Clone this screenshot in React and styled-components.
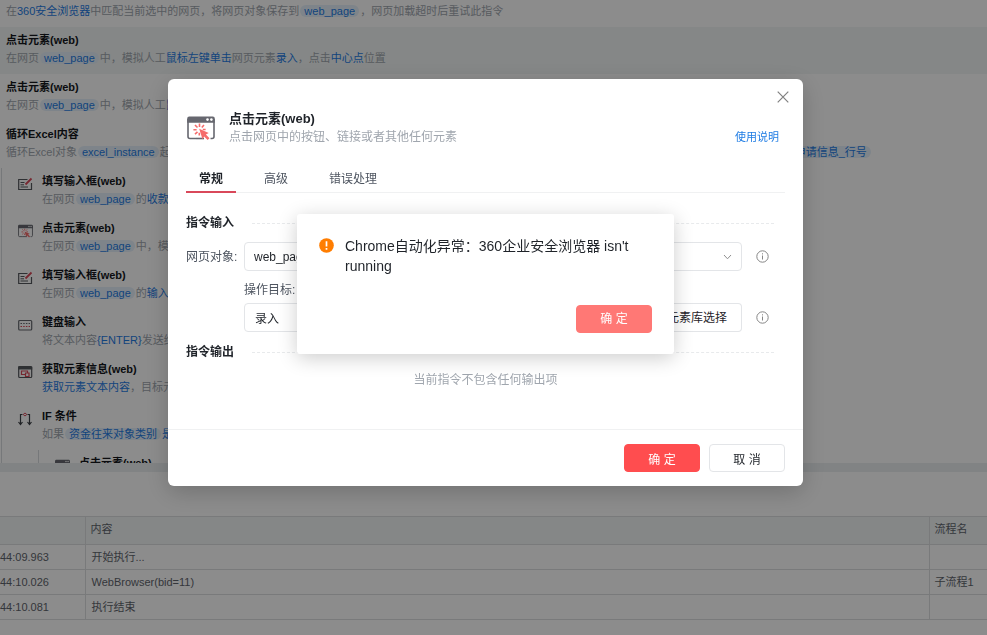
import styled, { createGlobalStyle } from "styled-components";

const colors = {
  primary: "#ff4d4f",
  primarySoft: "#ff7875",
  link: "#1f7ce4",
  text: "#1f2329",
  textRegular: "#4e5560",
  textMuted: "#a0a6ae",
  border: "#e3e5e8",
  line: "#f0f1f2",
  panel: "#f2f6f6",
  chip: "#e6f1fb",
};

const GlobalStyle = createGlobalStyle`
  * {
    box-sizing: border-box;
  }

  body {
    margin: 0;
    overflow: hidden;
    background: #fff;
    font-family: "Liberation Sans", "Noto Sans CJK SC", sans-serif;
    font-size: 12px;
    color: ${colors.text};
  }

  button, input, select {
    font: inherit;
    color: inherit;
    margin: 0;
  }
`;

const Page = styled.div`
  display: flex;
  flex-direction: column;
  height: 100vh;
`;

/* ---------- flow list ---------- */

const FlowPane = styled.main`
  flex: 1;
  min-height: 0;
  overflow: hidden;
  font-size: 11px;
  line-height: 18px;
  white-space: nowrap;
`;

const Command = styled.div`
  display: flex;
  gap: 9px;
  padding: ${(props) => (props.$untitled ? 2 : 4)}px 6px 7px ${(props) => (props.$nested ? 16 : 6)}px;
  background: ${(props) => (props.$selected ? colors.panel : "transparent")};

  svg {
    flex: none;
    margin-top: 5px;
  }
`;

const CommandTitle = styled.div`
  font-weight: 700;
  color: #14171c;
`;

const CommandDesc = styled.div`
  color: ${colors.textMuted};
`;

const Branch = styled.div`
  margin-left: ${(props) => props.$indent}px;
  border-left: 1px solid #d8dbde;
`;

const Value = styled.span`
  color: ${colors.link};
`;

const Chip = styled.span`
  margin: 0 1px;
  padding: 0 4px;
  border-radius: 7px;
  background: ${colors.chip};
  color: ${colors.link};
`;

const RangeText = styled.span`
  display: inline-block;
  min-width: 630px;
`;

/* ---------- log ---------- */

const Splitter = styled.div`
  height: 9px;
  background: #ebeff1;
`;

const LogPane = styled.section`
  height: 163px;
  padding-top: 44px;
`;

const LogTable = styled.table`
  width: 100%;
  table-layout: fixed;
  border-collapse: collapse;
  font-size: 11px;
  line-height: 18px;
  color: #5f656d;

  th,
  td {
    height: 25px;
    padding: 0 6px;
    border: 1px solid #dcdfe1;
    border-width: 1px 0 1px 1px;
    text-align: left;
    font-weight: 400;
    white-space: nowrap;
    overflow: hidden;
  }

  th {
    height: 28px;
    padding: 0 5px 3px;
    background: ${colors.panel};
  }

  th:first-child,
  td:first-child {
    width: 85px;
    padding: 0;
    border-left: 0;
  }

  th:last-child,
  td:last-child {
    width: 58px;
    padding-left: 5px;
  }
`;

/* ---------- command dialog ---------- */

const Overlay = styled.div`
  position: fixed;
  inset: 0;
  display: flex;
  align-items: flex-start;
  justify-content: center;
  padding: ${(props) => props.$top}px 16px 0 0;
  background: ${(props) => (props.$dim ? "rgba(0, 0, 0, 0.45)" : "transparent")};
`;

const Dialog = styled.section`
  position: relative;
  width: 100%;
  max-width: 635px;
  border-radius: 6px;
  background: #fff;
  box-shadow: 0 6px 24px rgba(0, 0, 0, 0.2);
`;

const CloseButton = styled.button`
  position: absolute;
  top: 8px;
  right: 10px;
  display: flex;
  align-items: center;
  justify-content: center;
  width: 20px;
  height: 20px;
  padding: 0;
  border: 0;
  background: none;
  cursor: pointer;
`;

const DialogHeader = styled.header`
  display: flex;
  align-items: center;
  gap: 14px;
  padding: 31px 24px 0 19px;
  line-height: 18px;

  h2 {
    margin: 0;
    font-size: 13px;
  }

  p {
    margin: 0;
    color: ${colors.textMuted};
  }
`;

const HelpLink = styled.a`
  align-self: flex-end;
  margin-left: auto;
  font-size: 11px;
  color: ${colors.link};
  text-decoration: none;
`;

const DialogBody = styled.div`
  padding: 0 18px;
  line-height: 18px;
`;

const Tabs = styled.div`
  display: flex;
  gap: 15px;
  margin-top: 19px;
  box-shadow: inset 0 -1px ${colors.line};
`;

const Tab = styled.button`
  height: 28px;
  padding: 1px 13px 0;
  border: 0;
  border-bottom: 2px solid ${(props) => (props.$active ? "#d9485a" : "transparent")};
  background: none;
  color: ${(props) => (props.$active ? colors.text : colors.textRegular)};
  font-weight: ${(props) => (props.$active ? 700 : 400)};
  cursor: pointer;
`;

const SectionTitle = styled.h3`
  display: flex;
  align-items: center;
  gap: 18px;
  margin: ${(props) => props.$top}px 11px 10px 0;
  font-size: 12px;

  &::after {
    content: "";
    flex: 1;
    border-top: 1px dashed #e8eaec;
  }
`;

const Form = styled.div`
  display: grid;
  grid-template-columns: 52px 1fr 21px;
  column-gap: 6px;
  align-items: center;
  padding-right: 16px;
  color: ${colors.textRegular};
  white-space: nowrap;
`;

const TargetLabel = styled.label`
  grid-column: 2 / 4;
  margin: 10px 0 4px;
`;

const SelectBox = styled.div`
  display: grid;
  align-items: center;

  select,
  svg {
    grid-area: 1 / 1;
  }

  select {
    width: 100%;
    height: 29px;
    padding: 0 9px;
    border: 1px solid ${colors.border};
    border-radius: 4px;
    background: #fff;
    color: ${colors.text};
    appearance: none;
  }

  svg {
    justify-self: end;
    margin-right: 10px;
    pointer-events: none;
  }
`;

const TargetBox = styled.div`
  grid-column: 2;
  display: flex;
  color: ${colors.text};

  input {
    flex: 1;
    min-width: 0;
    height: 29px;
    padding: 0 10px;
    border: 1px solid ${colors.border};
    border-radius: 4px 0 0 4px;
  }

  button {
    padding: 0 14px;
    border: 1px solid ${colors.border};
    border-left: 0;
    border-radius: 0 4px 4px 0;
    background: #fff;
  }
`;

const InfoButton = styled.button`
  display: flex;
  justify-content: flex-end;
  padding: 0;
  border: 0;
  background: none;
`;

const EmptyText = styled.p`
  margin: 0;
  text-align: center;
  color: ${colors.textMuted};
`;

const DialogFooter = styled.footer`
  display: flex;
  justify-content: flex-end;
  gap: 9px;
  margin-top: 40px;
  padding: 14px 18px;
  border-top: 1px solid ${colors.line};
`;

const Button = styled.button`
  width: 76px;
  height: 28px;
  padding: 0;
  border: 1px solid ${(props) => props.$color || colors.border};
  border-radius: 4px;
  background: ${(props) => props.$color || "#fff"};
  color: ${(props) => (props.$color ? "#fff" : colors.text)};
  cursor: pointer;
`;

/* ---------- error message ---------- */

const MessageBox = styled.section`
  display: flex;
  flex-direction: column;
  width: 100%;
  max-width: 377px;
  padding: 22px 22px 21px;
  border-radius: 3px;
  background: #fff;
  box-shadow: 0 4px 20px rgba(0, 0, 0, 0.2);

  ${Button} {
    align-self: flex-end;
    margin-top: 29px;
    padding-bottom: 4px;
  }
`;

const MessageText = styled.div`
  display: flex;
  gap: 11px;
  font-size: 14px;
  line-height: 20px;

  svg {
    flex: none;
    margin-top: 2px;
  }

  p {
    margin: 0;
  }
`;

/* ---------- icons ---------- */

function ClickIcon({ width = 28, height = 24 }) {
  return (
    <svg width={width} height={height} viewBox="0 0 28 24" fill="none">
      <path d="M9 22.500H3A2 2 0 0 1 1 20.500V3M27 3V20.500A2 2 0 0 1 25 22.500H23.500" stroke="#66676f" strokeWidth="1.600" />
      <path d="M.2 6.800V2.500A2 2 0 0 1 2.200.500H25.800A2 2 0 0 1 27.800 2.500V6.800Z" fill="#66676f" />
      <path d="M9 22.500H17" stroke="#66676f" strokeWidth="1.600" />
      <circle cx="20.500" cy="3.600" r="1.300" fill="#fff" />
      <circle cx="24.400" cy="3.600" r="1.300" fill="#fff" />
      <path d="M12.500 7.600V11M8 9L10.500 11.500M6.400 13.700H9.600M8 18.200L10.500 15.800M17 9L14.800 11.500M15.800 13.500H18.600M12.300 16.700V19.500" stroke="#f56c6c" strokeWidth="1.600" />
      <path d="M12.200 12.700L21.700 17L18.900 18.600L22.500 22.200L20.600 24L17.100 20.600L15.500 23.300Z" fill="#f56c6c" />
    </svg>
  );
}

function InputIcon() {
  return (
    <svg width="15" height="14" viewBox="2 0 15 14" fill="none" stroke="#55585d">
      <path d="M11.500 2.500H2.700V12.500H15.500V6" strokeWidth="1.200" />
      <path d="M4.500 5.500H8.500M4.500 7.800H8M4.500 10H12" />
      <path d="M9.500 7.500L15.500 1.500" stroke="#d94858" strokeWidth="1.800" />
    </svg>
  );
}

function KeyboardIcon() {
  return (
    <svg width="15" height="14" viewBox="2 0 15 14" fill="none" stroke="#66696f">
      <rect x="2.700" y="2.500" width="13" height="9.500" rx="1" strokeWidth="1.200" />
      <path d="M4.500 5.500H14" strokeDasharray="1.500 1.200" />
      <path d="M4.500 8.500H14" stroke="#d94858" strokeDasharray="1.500 1.200" />
    </svg>
  );
}

function ElementInfoIcon() {
  return (
    <svg width="15" height="14" viewBox="2 0 15 14" fill="none" stroke="#55585d">
      <rect x="2.700" y="1.500" width="13" height="11" rx="1" strokeWidth="1.200" />
      <path d="M2.200 3H16.200" strokeWidth="3" />
      <path d="M9.500 9.500H5.500V6H11.500V8M9.500 8H13V11.500H9.500Z" stroke="#d94858" strokeWidth="1.200" />
    </svg>
  );
}

function BranchIcon() {
  return (
    <svg width="15" height="14" viewBox="2 0 15 14" fill="none" stroke="#3d4046">
      <path d="M6.500 2.500H4.500V12M11.500 2.500H13.500V12M2.500 10L4.500 12.500L6.500 10M11.500 10L13.500 12.500L15.500 10" strokeWidth="1.200" />
      <path d="M9 1L10.800 2.500L9 4L7.200 2.500Z" stroke="#d94858" />
    </svg>
  );
}

function InfoIcon() {
  return (
    <svg width="13" height="13" viewBox="0 0 13 13" fill="none" stroke="#858585">
      <circle cx="6.500" cy="6.500" r="5.700" />
      <path d="M6.500 5.500V9.500M6.500 3.300V4.400" />
    </svg>
  );
}

const nestedCommands = [
  {
    icon: <InputIcon />,
    title: "填写输入框(web)",
    desc: <>在网页<Chip>web_page</Chip>的<Value>收款</Value></>,
  },
  {
    icon: <ClickIcon width={15} height={14} />,
    title: "点击元素(web)",
    desc: <>在网页<Chip>web_page</Chip>中，模拟人工</>,
  },
  {
    icon: <InputIcon />,
    title: "填写输入框(web)",
    desc: <>在网页<Chip>web_page</Chip>的<Value>输入</Value></>,
  },
  {
    icon: <KeyboardIcon />,
    title: "键盘输入",
    desc: <>将文本内容<Value>{"{ENTER}"}</Value>发送给</>,
  },
  {
    icon: <ElementInfoIcon />,
    title: "获取元素信息(web)",
    desc: <><Value>获取元素文本内容</Value>，目标元素</>,
  },
  {
    icon: <BranchIcon />,
    title: "IF 条件",
    desc: <>如果<Chip>资金往来对象类别</Chip><Value>是</Value></>,
  },
];

const logs = [
  { time: "44:09.963", content: "开始执行...", flow: "" },
  { time: "44:10.026", content: "WebBrowser(bid=11)", flow: "子流程1" },
  { time: "44:10.081", content: "执行结束", flow: "" },
];

function CommandRow({ icon, title, desc, selected }) {
  return (
    <Command $nested={Boolean(icon)} $untitled={!title} $selected={selected}>
      {icon}
      <div>
        {title && <CommandTitle>{title}</CommandTitle>}
        <CommandDesc>{desc}</CommandDesc>
      </div>
    </Command>
  );
}

function FlowList() {
  return (
    <FlowPane>
      <CommandRow
        desc={
          <>
            在<Value>360安全浏览器</Value>中匹配当前选中的网页，将网页对象保存到
            <Chip>web_page</Chip>，网页加载超时后重试此指令
          </>
        }
      />
      <CommandRow
        selected
        title="点击元素(web)"
        desc={
          <>
            在网页<Chip>web_page</Chip>中，模拟人工<Value>鼠标左键单击</Value>网页元素
            <Value>录入</Value>，点击<Value>中心点</Value>位置
          </>
        }
      />
      <CommandRow
        title="点击元素(web)"
        desc={<>在网页<Chip>web_page</Chip>中，模拟人工<Value>鼠标左键</Value></>}
      />
      <CommandRow
        title="循环Excel内容"
        desc={
          <>
            循环Excel对象<Chip>excel_instance</Chip><RangeText>起始行</RangeText>
            <Chip>申请信息_行号</Chip>
          </>
        }
      />
      <Branch $indent={1}>
        {nestedCommands.map((command, index) => (
          <CommandRow key={index} {...command} />
        ))}
        <Branch $indent={36}>
          <CommandRow icon={<ClickIcon width={15} height={14} />} title="点击元素(web)" />
        </Branch>
      </Branch>
    </FlowPane>
  );
}

function LogPanel() {
  return (
    <LogPane>
      <LogTable>
        <thead>
          <tr>
            <th aria-label="时间" />
            <th>内容</th>
            <th>流程名</th>
          </tr>
        </thead>
        <tbody>
          {logs.map((log) => (
            <tr key={log.time}>
              <td>{log.time}</td>
              <td>{log.content}</td>
              <td>{log.flow}</td>
            </tr>
          ))}
        </tbody>
      </LogTable>
    </LogPane>
  );
}

function CommandDialog() {
  return (
    <Overlay $top={79} $dim>
      <Dialog role="dialog" aria-labelledby="dialog-title">
        <CloseButton aria-label="关闭">
          <svg width="12" height="12" viewBox="0 0 12 12" stroke="#808080" strokeWidth="1.200">
            <path d="M.700.700L11.300 11.300M11.300.700L.700 11.300" />
          </svg>
        </CloseButton>
        <DialogHeader>
          <ClickIcon />
          <div>
            <h2 id="dialog-title">点击元素(web)</h2>
            <p>点击网页中的按钮、链接或者其他任何元素</p>
          </div>
          <HelpLink href="#help">使用说明</HelpLink>
        </DialogHeader>
        <DialogBody>
          <Tabs role="tablist">
            <Tab role="tab" aria-selected="true" $active>常规</Tab>
            <Tab role="tab">高级</Tab>
            <Tab role="tab">错误处理</Tab>
          </Tabs>
          <SectionTitle $top={21}>指令输入</SectionTitle>
          <Form>
            <label htmlFor="page">网页对象:</label>
            <SelectBox>
              <select id="page" defaultValue="web_page">
                <option>web_page</option>
              </select>
              <svg width="9" height="6" viewBox="0 0 9 6" fill="none" stroke="#8f8f8f">
                <path d="M1 1L4.500 4.800L8 1" />
              </svg>
            </SelectBox>
            <InfoButton aria-label="网页对象说明"><InfoIcon /></InfoButton>
            <TargetLabel htmlFor="target">操作目标:</TargetLabel>
            <TargetBox>
              <input id="target" defaultValue="录入" />
              <button>去元素库选择</button>
            </TargetBox>
            <InfoButton aria-label="操作目标说明"><InfoIcon /></InfoButton>
          </Form>
          <SectionTitle $top={11}>指令输出</SectionTitle>
          <EmptyText>当前指令不包含任何输出项</EmptyText>
        </DialogBody>
        <DialogFooter>
          <Button $color={colors.primary}>确 定</Button>
          <Button>取 消</Button>
        </DialogFooter>
      </Dialog>
    </Overlay>
  );
}

function ErrorMessage() {
  return (
    <Overlay $top={214}>
      <MessageBox role="alertdialog" aria-labelledby="error-text">
        <MessageText>
          <svg width="15" height="15" viewBox="0 0 15 15">
            <circle cx="7.500" cy="7.500" r="7.300" fill="#ff7d00" />
            <path d="M7.500 3.300V8.600M7.500 10V11.800" stroke="#fff" strokeWidth="1.700" />
          </svg>
          <p id="error-text">Chrome自动化异常：360企业安全浏览器 isn't running</p>
        </MessageText>
        <Button $color={colors.primarySoft}>确 定</Button>
      </MessageBox>
    </Overlay>
  );
}

export default function App() {
  return (
    <>
      <GlobalStyle />
      <Page>
        <FlowList />
        <Splitter />
        <LogPanel />
      </Page>
      <CommandDialog />
      <ErrorMessage />
    </>
  );
}
